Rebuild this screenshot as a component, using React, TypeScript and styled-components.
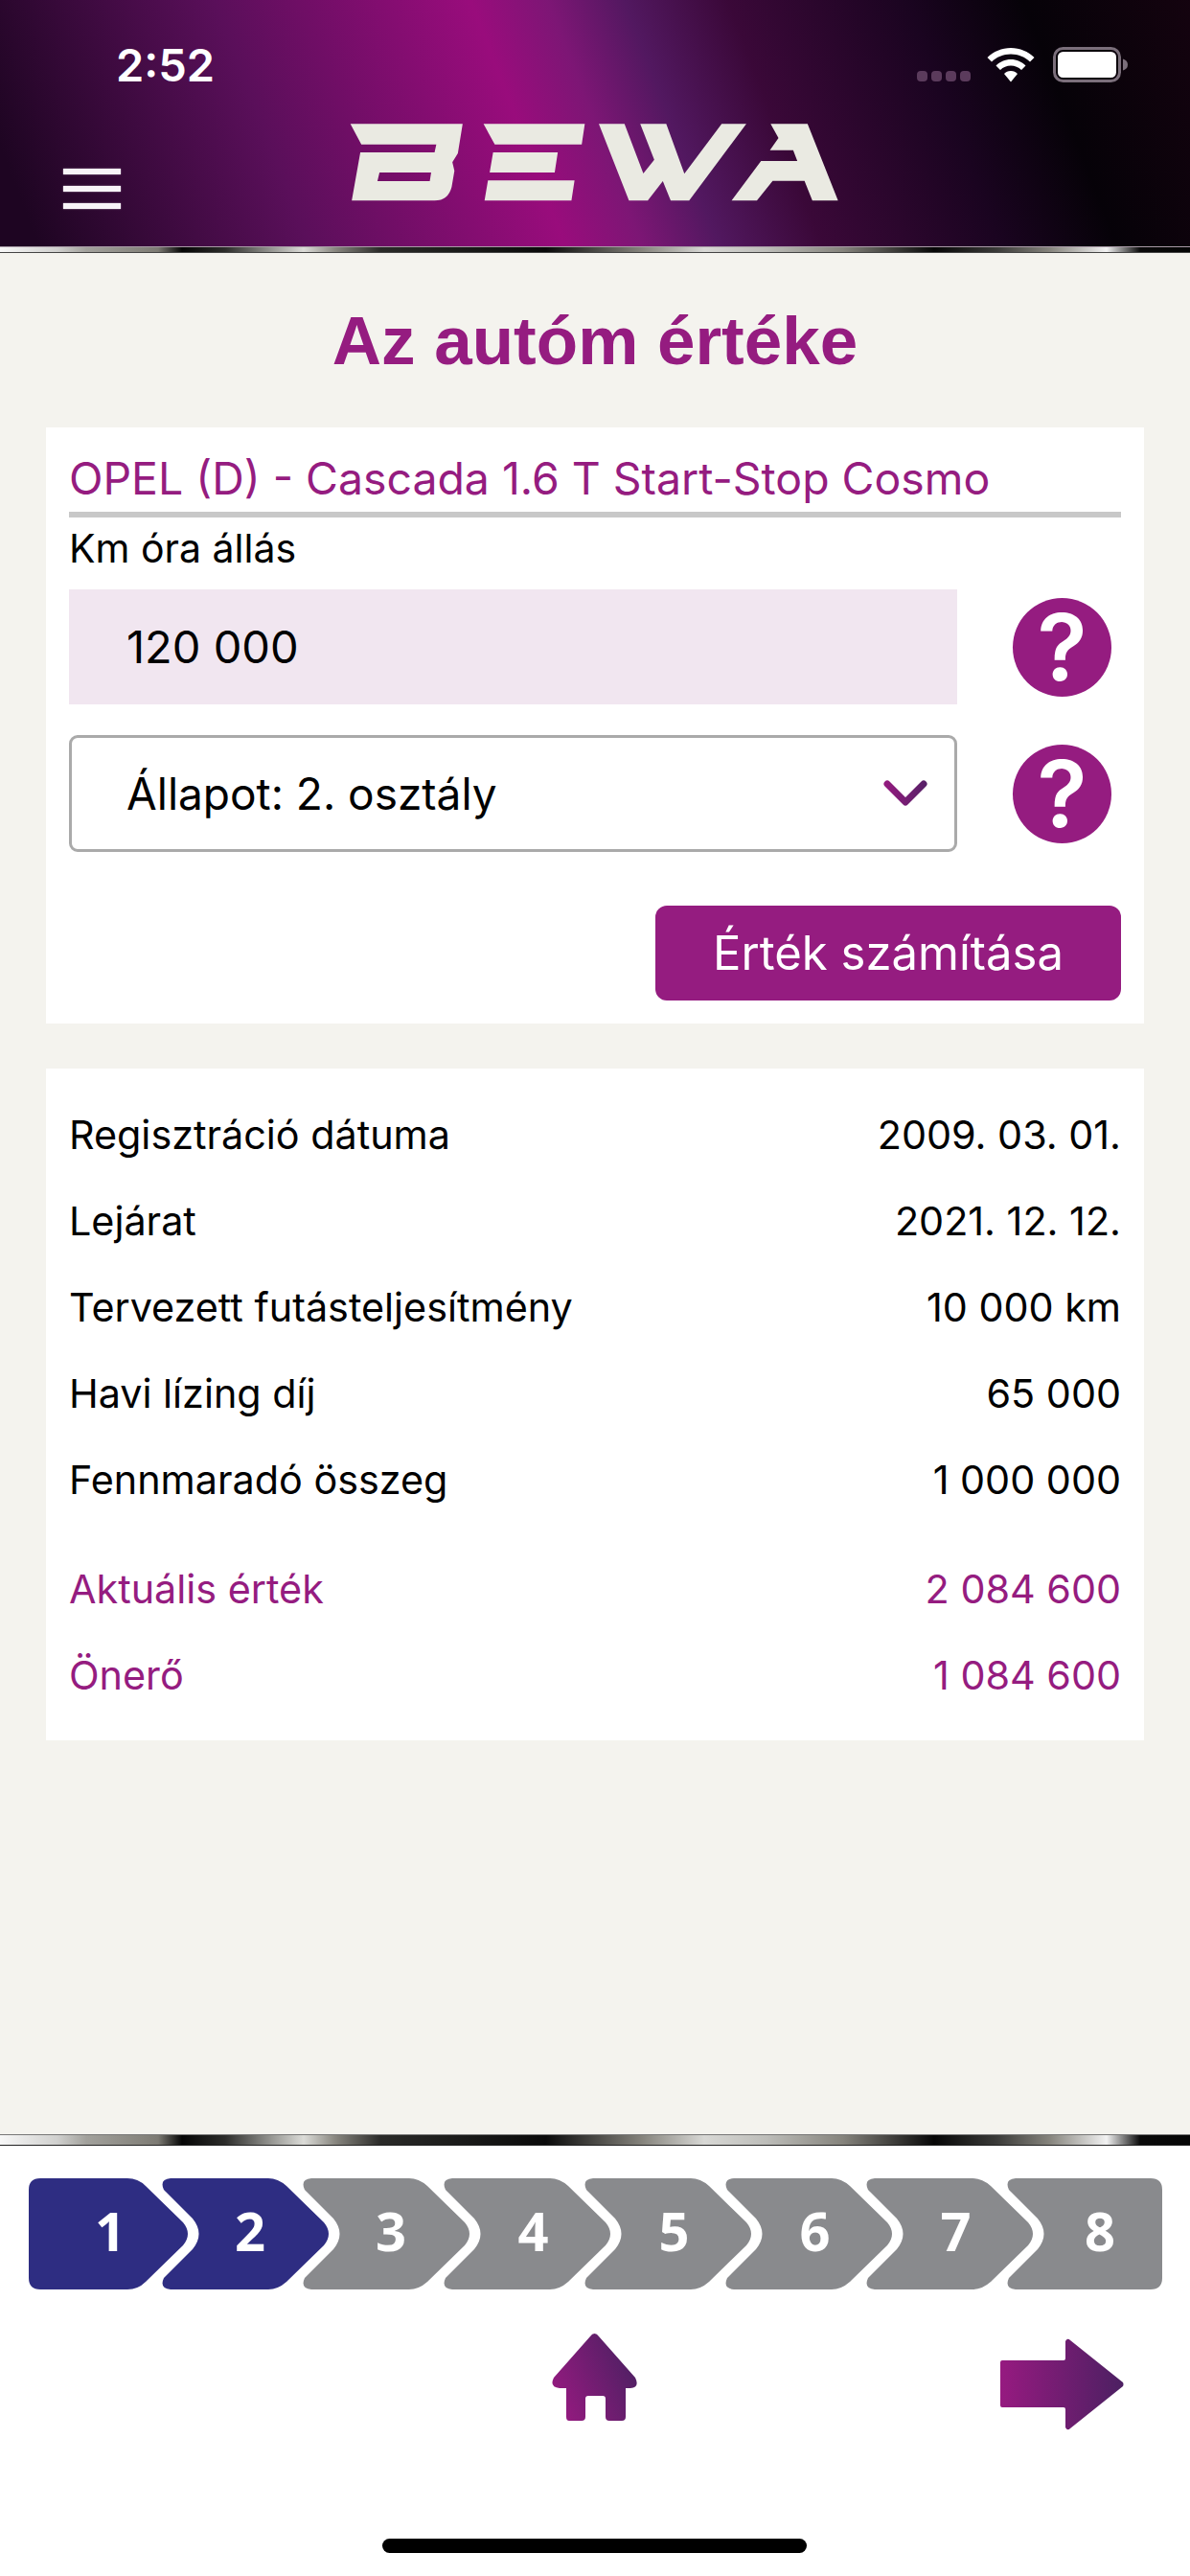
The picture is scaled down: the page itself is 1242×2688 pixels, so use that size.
import React from "react";
import styled, { createGlobalStyle } from "styled-components";

const PURPLE = "#951c80";

const METAL = `linear-gradient(90deg,
  #f8f8f8 0, #d0d0ce 60px, #a2a19c 90px, #85837c 150px, #7c7a73 165px, #050505 190px, #2c2c2a 235px, #9a9a96 285px, #dcdcd8 317px, #88867f 350px,
  #2a2a28 397px, #0a0a0a 570px, #85837c 670px, #d8d8d5 735px, #bdbdb9 800px, #85837c 880px, #060606 975px,
  #3a3a38 1040px, #85837c 1095px, #f2f2f2 1155px, #0a0a0a 1190px, #050505 1242px)`;

const GlobalStyle = createGlobalStyle`
  html, body { margin: 0; padding: 0; background: #fff; }
  body { font-family: "Inter", "Liberation Sans", sans-serif; }
`;

const Page = styled.div`
  width: 1242px;
  height: 2688px;
  display: flex;
  flex-direction: column;
  overflow: hidden;
`;

const Header = styled.header`
  height: 257px;
  flex: none;
  display: flex;
  flex-direction: column;
  background: linear-gradient(69deg, #1e0522 3%, #5a0f5a 24%, #990c7c 44%, #7d1675 50%, #521860 56%, #3a0838 64%, #1a0420 78%, #060208 87%, #14030f 100%);
`;

const StatusBar = styled.div`
  height: 110px;
  display: flex;
  align-items: flex-start;
  justify-content: space-between;
  padding: 39px 65px 0 121px;
  box-sizing: border-box;
`;

const Time = styled.span`
  font-size: 47px;
  line-height: 57px;
  font-weight: 600;
  color: #fff;
`;

const StatusIcons = styled.div`
  display: flex;
  align-items: flex-end;
  padding-top: 10px;
`;

const NavRow = styled.div`
  display: grid;
  grid-template-columns: 1fr 510px 1fr;
  padding: 0 66px;
  align-items: flex-start;
`;

const Burger = styled.div`
  width: 60px;
  margin-top: 66px;
  display: flex;
  flex-direction: column;
  gap: 12px;
`;

const BurgerBar = styled.span`
  height: 6px;
  background: #f8f4f8;
  box-shadow: 0 0 1.5px #d8c8d8;
`;

const Stripe = styled.div`
  height: 5px;
  flex: none;
  background: ${METAL};
  border-top: 1px solid #a89aa6;
  border-bottom: 1px solid #444;
`;

const Content = styled.main`
  flex: 1;
  background: #f4f3ee;
  padding: 0 48px;
  display: flex;
  flex-direction: column;
`;

const Title = styled.h1`
  margin: 0;
  padding-top: 47px;
  height: 182px;
  box-sizing: border-box;
  text-align: center;
  font-family: "Liberation Sans", sans-serif;
  font-size: 71px;
  line-height: 90px;
  font-weight: 700;
  color: ${PURPLE};
`;

const Card = styled.section`
  background: #fff;
  padding: 0 24px;
  display: flex;
  flex-direction: column;
`;

const FormCard = styled(Card)`
  height: 622px;
  margin-bottom: 47px;
  box-sizing: border-box;
`;

const CarName = styled.div`
  height: 94px;
  box-sizing: border-box;
  padding-top: 23px;
  font-size: 46.4px;
  line-height: 60px;
  color: ${PURPLE};
  border-bottom: 6px solid #c8c8c8;
`;

const FieldLabel = styled.div`
  height: 75px;
  font-size: 41px;
  line-height: 64px;
  color: #000;
`;

const FieldRow = styled.div`
  display: flex;
  align-items: center;
  margin-bottom: 32px;
`;

const KmInput = styled.div`
  width: 927px;
  height: 120px;
  box-sizing: border-box;
  padding-left: 60px;
  background: #f1e6f0;
  font-size: 47px;
  line-height: 120px;
  color: #000;
`;

const Select = styled.div`
  width: 927px;
  height: 122px;
  box-sizing: border-box;
  padding: 0 28px 0 57px;
  background: #fff;
  border: 3px solid #aaa;
  border-radius: 9px;
  display: flex;
  align-items: center;
  justify-content: space-between;
  font-size: 46px;
  color: #000;
`;

const HelpButton = styled.div`
  width: 103px;
  height: 103px;
  margin-left: 58px;
  flex: none;
  border-radius: 50%;
  background: ${PURPLE};
  color: #fff;
  display: flex;
  align-items: center;
  justify-content: center;
  font-size: 96px;
  line-height: 103px;
  font-weight: 600;
`;

const Actions = styled.div`
  display: flex;
  justify-content: flex-end;
  margin-top: 24px;
`;

const CalcButton = styled.div`
  width: 486px;
  height: 99px;
  border-radius: 12px;
  background: ${PURPLE};
  color: #fff;
  font-size: 49px;
  line-height: 99px;
  text-align: center;
`;

const DataCard = styled(Card)`
  height: 701px;
  box-sizing: border-box;
  padding-top: 24px;
`;

const DataRow = styled.div<{ $accent?: boolean }>`
  height: 90px;
  display: flex;
  justify-content: space-between;
  align-items: center;
  font-size: 41.3px;
  color: ${(p) => (p.$accent ? PURPLE : "#000")};
`;

const AccentGap = styled.div`
  height: 24px;
`;

const Footer = styled.footer`
  height: 461px;
  flex: none;
  background: #fff;
  display: flex;
  flex-direction: column;
`;

const FooterStripe = styled(Stripe)`
  height: 10px;
  border-top: 1px solid #777;
  border-bottom: 1px solid #222;
`;

const Steps = styled.div`
  display: flex;
  margin-top: 34px;
  padding-left: 30px;
`;

const Step = styled.div<{ $width: number; $offset: number }>`
  position: relative;
  width: ${(p) => p.$width}px;
  height: 116px;
  flex: none;
  box-sizing: border-box;
  margin-right: -28px;
  padding-left: ${(p) => p.$offset}px;
  padding-bottom: 8px;
  display: flex;
  align-items: center;
  justify-content: center;
  font-family: "Open Sans", sans-serif;
  font-size: 56px;
  font-weight: 700;
  color: #fff;
`;

const StepShape = styled.svg`
  position: absolute;
  left: 0;
  top: 0;
`;

const StepNumber = styled.span`
  position: relative;
`;

const BottomNav = styled.nav`
  height: 110px;
  margin-top: 46px;
  display: grid;
  grid-template-columns: 576px 89px 379px 129px;
  align-items: start;
`;

const ArrowSlot = styled.div`
  margin-top: 5px;
`;

const HomeBar = styled.div`
  width: 443px;
  height: 15px;
  margin: 104px auto 0 399px;
  border-radius: 8px;
  background: #000;
`;

const FIRST = "M12 0H103Q114 0 122 8L161 46Q171 58 161 70L122 108Q114 116 103 116H12Q0 116 0 104V12Q0 0 12 0Z";
const MIDDLE = "M10 0H112Q122 0 131 8L170 46Q180 58 170 70L131 108Q122 116 112 116H10Q-2 115 3 104L33 74Q46 58 33 42L3 12Q-2 1 10 0Z";
const LAST = "M10 0H151Q163 0 163 12V104Q163 116 151 116H10Q-2 115 3 104L33 74Q46 58 33 42L3 12Q-2 1 10 0Z";

const STEPS = [
  { n: 1, width: 166, offset: 4, d: FIRST, active: true },
  { n: 2, width: 175, offset: 11, d: MIDDLE, active: true },
  { n: 3, width: 175, offset: 11, d: MIDDLE, active: false },
  { n: 4, width: 175, offset: 14, d: MIDDLE, active: false },
  { n: 5, width: 175, offset: 14, d: MIDDLE, active: false },
  { n: 6, width: 175, offset: 14, d: MIDDLE, active: false },
  { n: 7, width: 175, offset: 14, d: MIDDLE, active: false },
  { n: 8, width: 163, offset: 33, d: LAST, active: false },
];

const ROWS = [
  ["Regisztráció dátuma", "2009. 03. 01."],
  ["Lejárat", "2021. 12. 12."],
  ["Tervezett futásteljesítmény", "10 000 km"],
  ["Havi lízing díj", "65 000"],
  ["Fennmaradó összeg", "1 000 000"],
];

const Logo = () => (
  <svg width="560" height="110" viewBox="0 0 1568 330" preserveAspectRatio="none" style={{ display: "block", marginLeft: -26 }}>
    <g fill="#eaeae2">
      <path fillRule="evenodd" d="M72 58H400L386 150L370 178L376 205L368 255Q358 298 318 298H76L101 147H318L323 122H104ZM157 210L151 237H304L308 210Z" />
      <path d="M461 58H757L748 122H494ZM489 147H678L669 210H479ZM474 235H727L718 298H464Z" />
      <path d="M798 58H873L928 213L960 170L919 58H995L1048 214L1157 58H1229L1062 298H1008L985 237L941 298H886Z" />
      <path d="M1300 58H1408L1497 298H1422L1399 236H1306L1260 298H1186L1272 174H1378L1366 140H1298L1323 102Z" />
    </g>
  </svg>
);

const Wifi = () => (
  <svg width="50" height="36" viewBox="0 0 50 36" style={{ marginLeft: 16 }}>
    <path fill="#fff" d="M25 0C15.5 0 7 3.8 0.5 10L5 14.5C10 9.6 17 6.5 25 6.5S40 9.6 45 14.5L49.5 10C43 3.8 34.5 0 25 0ZM25 12C19 12 13.5 14.4 9.5 18.5L14 23C17 20.2 20.8 18.5 25 18.5S33 20.2 36 23L40.5 18.5C36.5 14.4 31 12 25 12ZM25 24C22 24 19.8 25 18 27L25 35.5L32 27C30.2 25 28 24 25 24Z" />
  </svg>
);

const Battery = () => (
  <svg width="78" height="37" viewBox="0 0 78 37" style={{ marginLeft: 19 }}>
    <rect x="1.5" y="1.5" width="68" height="34" rx="9" fill="none" stroke="#7b6f7b" strokeWidth="3" />
    <rect x="5" y="5" width="61" height="27" rx="5.5" fill="#fff" />
    <path d="M73 12.5Q78 14 78 18.5T73 24.5Z" fill="#7b6f7b" />
  </svg>
);

const SignalDots = () => (
  <svg width="57" height="11" viewBox="0 0 57 11" style={{ marginBottom: 1 }}>
    {[0, 15, 30, 45].map((x) => (
      <rect key={x} x={x} width="11" height="11" rx="4" fill="#5b3b5c" />
    ))}
  </svg>
);

const HomeIcon = () => (
  <svg width="89" height="91" viewBox="0 0 89 91" style={{ display: "block" }}>
    <defs>
      <linearGradient id="homeFill" x1="0" y1="0.75" x2="1" y2="0.3">
        <stop offset="0" stopColor="#961a80" />
        <stop offset="1" stopColor="#4c2062" />
      </linearGradient>
    </defs>
    <path fill="url(#homeFill)" d="M44.5 0Q47 0 49 3L87 46Q92 56 82 57H77V87Q77 91 73 91H60Q56 91 56 87V68Q56 65 53 65H38Q35 65 35 68V87Q35 91 31 91H18Q15 91 15 87V57H8Q-3 56 2 46L40 3Q42 0 44.5 0Z" />
  </svg>
);

const ArrowIcon = () => (
  <svg width="129" height="96" viewBox="0 0 129 96" style={{ display: "block" }}>
    <defs>
      <linearGradient id="arrowFill" x1="0" y1="0" x2="1" y2="0">
        <stop offset="0" stopColor="#961a80" />
        <stop offset="1" stopColor="#4c2062" />
      </linearGradient>
    </defs>
    <path fill="url(#arrowFill)" d="M2 23H66Q68 23 68 21V3Q70 -1 73 2L128 46Q129 48 128 50L73 94Q70 97 68 93V74Q68 72 66 72H2Q0 72 0 70V25Q0 23 2 23Z" />
  </svg>
);

const Chevron = () => (
  <svg width="46" height="28" viewBox="0 0 46 28">
    <defs>
      <linearGradient id="chevronStroke" gradientUnits="userSpaceOnUse" x1="0" y1="0" x2="46" y2="0">
        <stop offset="0" stopColor="#961a80" />
        <stop offset="1" stopColor="#552066" />
      </linearGradient>
    </defs>
    <path d="M4 4L23 23L42 4" fill="none" stroke="url(#chevronStroke)" strokeWidth="7" strokeLinecap="round" strokeLinejoin="round" />
  </svg>
);

const App: React.FC = () => {
  return (
    <Page>
      <GlobalStyle />
      <Header>
        <StatusBar>
          <Time>2:52</Time>
          <StatusIcons>
            <SignalDots />
            <Wifi />
            <Battery />
          </StatusIcons>
        </StatusBar>
        <NavRow>
          <Burger>
            <BurgerBar />
            <BurgerBar />
            <BurgerBar />
          </Burger>
          <Logo />
        </NavRow>
      </Header>
      <Stripe />
      <Content>
        <Title>Az autóm értéke</Title>
        <FormCard>
          <CarName>OPEL (D) - Cascada 1.6 T Start-Stop Cosmo</CarName>
          <FieldLabel>Km óra állás</FieldLabel>
          <FieldRow>
            <KmInput>120 000</KmInput>
            <HelpButton>?</HelpButton>
          </FieldRow>
          <FieldRow>
            <Select>
              Állapot: 2. osztály
              <Chevron />
            </Select>
            <HelpButton>?</HelpButton>
          </FieldRow>
          <Actions>
            <CalcButton>Érték számítása</CalcButton>
          </Actions>
        </FormCard>
        <DataCard>
          {ROWS.map(([label, value]) => (
            <DataRow key={label}>
              <span>{label}</span>
              <span>{value}</span>
            </DataRow>
          ))}
          <AccentGap />
          <DataRow $accent>
            <span>Aktuális érték</span>
            <span>2 084 600</span>
          </DataRow>
          <DataRow $accent>
            <span>Önerő</span>
            <span>1 084 600</span>
          </DataRow>
        </DataCard>
      </Content>
      <Footer>
        <FooterStripe />
        <Steps>
          {STEPS.map((step) => (
            <Step key={step.n} $width={step.width} $offset={step.offset}>
              <StepShape width={step.width} height="116" viewBox={`0 0 ${step.width} 116`}>
                <path d={step.d} fill={step.active ? "#2e2d82" : "#898a8d"} />
              </StepShape>
              <StepNumber>{step.n}</StepNumber>
            </Step>
          ))}
        </Steps>
        <BottomNav>
          <span />
          <HomeIcon />
          <span />
          <ArrowSlot>
            <ArrowIcon />
          </ArrowSlot>
        </BottomNav>
        <HomeBar />
      </Footer>
    </Page>
  );
};

export default App;
